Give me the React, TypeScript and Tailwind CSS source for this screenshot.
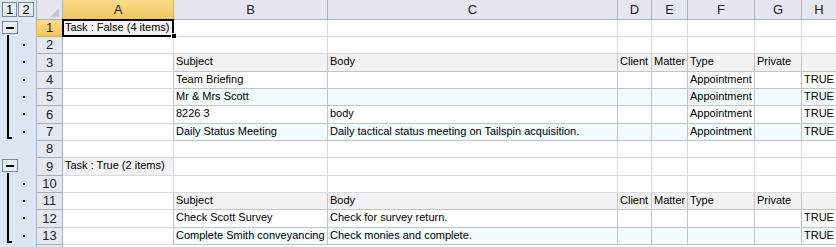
import React from 'react';

type Outline = 'group' | 'detail' | 'last' | 'none';
type Kind = 'plain' | 'head' | 'white' | 'tint';

interface SheetRow {
  n: number;
  h: string;
  outline: Outline;
  kind: Kind;
  cells: string[];
  groupCell?: boolean;
  selected?: boolean;
}

const colW = ['w-[111px]', 'w-[154px]', 'w-[290px]', 'w-[34px]', 'w-[36px]', 'w-[67px]', 'w-[47px]', 'w-[35px]'];
const letters = ['A', 'B', 'C', 'D', 'E', 'F', 'G', 'H'];
const headCells = ['', 'Subject', 'Body', 'Client', 'Matter', 'Type', 'Private', ''];

const rows: SheetRow[] = [
  { n: 1, h: 'h-[17px]', outline: 'group', kind: 'plain', cells: ['Task : False (4 items)'], groupCell: true, selected: true },
  { n: 2, h: 'h-[17px]', outline: 'detail', kind: 'plain', cells: [] },
  { n: 3, h: 'h-[18px]', outline: 'detail', kind: 'head', cells: headCells },
  { n: 4, h: 'h-[17px]', outline: 'detail', kind: 'white', cells: ['', 'Team Briefing', '', '', '', 'Appointment', '', 'TRUE'] },
  { n: 5, h: 'h-[17px]', outline: 'detail', kind: 'tint', cells: ['', 'Mr & Mrs Scott', '', '', '', 'Appointment', '', 'TRUE'] },
  { n: 6, h: 'h-[18px]', outline: 'detail', kind: 'white', cells: ['', '8226 3', 'body', '', '', 'Appointment', '', 'TRUE'] },
  { n: 7, h: 'h-[17px]', outline: 'last', kind: 'tint', cells: ['', 'Daily Status Meeting', 'Daily tactical status meeting on Tailspin acquisition.', '', '', 'Appointment', '', 'TRUE'] },
  { n: 8, h: 'h-[17px]', outline: 'none', kind: 'plain', cells: [] },
  { n: 9, h: 'h-[18px]', outline: 'group', kind: 'plain', cells: ['Task : True (2 items)'], groupCell: true },
  { n: 10, h: 'h-[17px]', outline: 'detail', kind: 'plain', cells: [] },
  { n: 11, h: 'h-[17px]', outline: 'detail', kind: 'head', cells: headCells },
  { n: 12, h: 'h-[18px]', outline: 'detail', kind: 'white', cells: ['', 'Check Scott Survey', 'Check for survey return.', '', '', '', '', 'TRUE'] },
  { n: 13, h: 'h-[17px]', outline: 'last', kind: 'tint', cells: ['', 'Complete Smith conveyancing', 'Check monies and complete.', '', '', '', '', 'TRUE'] },
];

const OutlineCell: React.FC<{ type: Outline }> = ({ type }) => (
  <div className="relative w-[36px] shrink-0 bg-[#dce6f4]">
    {type === 'group' && (
      <>
        <div className="absolute left-[2px] top-[1px] flex h-[13px] w-[16px] items-center justify-center border border-[#7d8796] bg-[#e6edf7]">
          <div className="h-[2px] w-[8px] bg-black" />
        </div>
        <div className="absolute left-[7px] top-[15px] bottom-0 w-[2px] bg-black" />
      </>
    )}
    {(type === 'detail' || type === 'last') && (
      <>
        <div className={`absolute left-[7px] top-0 w-[2px] bg-black ${type === 'last' ? 'bottom-[2px]' : 'bottom-0'}`} />
        {type === 'last' && <div className="absolute bottom-[2px] left-[7px] h-[2px] w-[5px] bg-black" />}
        <div className="absolute left-[23px] top-[7px] h-[2px] w-[2px] bg-black" />
      </>
    )}
  </div>
);

const Cell: React.FC<{ row: SheetRow; col: number }> = ({ row, col }) => {
  const text = row.cells[col] || '';
  const inTable = row.kind !== 'plain' && col > 0;
  let bg = 'bg-white';
  if (inTable && row.kind === 'head') bg = 'bg-[#f2f2f2]';
  if (inTable && row.kind === 'tint') bg = 'bg-[#f2fbfc]';
  if (col === 0 && row.groupCell) bg = 'bg-[#f2f2f2]';
  const border = inTable ? 'border-[#c4c4c4]' : 'border-[#d6dbe4]';
  const rightBorder = col === 0 && row.kind !== 'plain' ? 'border-r-[#c4c4c4]' : '';
  return (
    <div className={`relative ${colW[col]} shrink-0 border-r border-b ${border} ${rightBorder} ${bg} whitespace-nowrap pl-[2px] text-[11px] leading-[15px] text-black ${row.selected && col === 0 ? 'z-10' : 'overflow-hidden'}`}>
      {text}
      {row.selected && col === 0 && (
        <>
          <div className="absolute -left-px -top-px -right-px -bottom-px border-2 border-black" />
          <div className="absolute -right-[4px] -bottom-[3px] h-[6px] w-[6px] border border-white bg-black" />
        </>
      )}
    </div>
  );
};

export default function App() {
  return (
    <div className="h-[247px] w-[836px] overflow-hidden bg-white font-['Liberation_Sans',Arial,sans-serif]">
      {/* column header */}
      <div className="flex h-[20px]">
        <div className="relative flex w-[36px] shrink-0 gap-px bg-[#dce6f4] pl-[2px] pt-[2px]">
          <div className="flex h-[15px] w-[15px] items-center justify-center border border-[#7d8796] bg-[#e9eef6] text-[13px] leading-none text-black">1</div>
          <div className="flex h-[15px] w-[16px] items-center justify-center border border-[#7d8796] bg-[#e9eef6] text-[13px] leading-none text-black">2</div>
        </div>
        <div className="relative w-[27px] shrink-0 border-x border-b border-[#a9b0bd] bg-[#e4e7ef]">
          <div className="absolute bottom-[2px] right-[3px] h-0 w-0 border-b-[9px] border-l-[9px] border-b-[#c3c9d4] border-l-transparent" />
        </div>
        {letters.map((l, i) => (
          <div
            key={l}
            className={`flex ${colW[i]} shrink-0 items-center justify-center border-r border-b text-[13px] text-[#222] ${
              i === 0 ? 'border-[#e2a84a] bg-gradient-to-b from-[#f9dc8c] to-[#f3c65c]' : 'border-[#a9b0bd] bg-[#e4e7ef]'
            }`}
          >
            {l}
          </div>
        ))}
      </div>

      {rows.map(row => (
        <div key={row.n} className={`flex ${row.h}`}>
          <OutlineCell type={row.outline} />
          <div
            className={`flex w-[27px] shrink-0 items-center justify-center border-x border-b text-[13px] text-[#222] ${
              row.selected ? 'border-[#e2a84a] bg-gradient-to-b from-[#f9dc8c] to-[#f3c65c]' : 'border-[#a9b0bd] bg-[#e4e8f0]'
            }`}
          >
            {row.n}
          </div>
          {letters.map((l, i) => (
            <Cell key={l} row={row} col={i} />
          ))}
        </div>
      ))}
      <div className="flex h-[4px]">
        <div className="w-[36px] shrink-0 bg-[#dce6f4]" />
        <div className="w-[27px] shrink-0 border-x border-[#a9b0bd] bg-[#e4e8f0]" />
      </div>
    </div>
  );
}
